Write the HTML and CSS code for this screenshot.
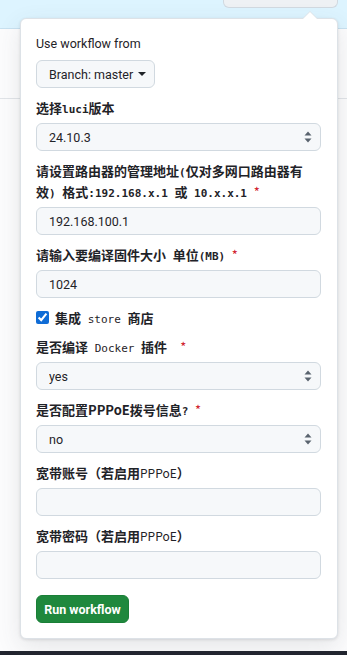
FILE: index.html
```html
<!DOCTYPE html>
<html lang="en">
<head>
    <meta charset="UTF-8">
    <meta name="viewport" content="width=device-width, initial-scale=1.0">
    <title>Run workflow</title>
    <link rel="stylesheet" href="styles.css">
</head>
<body>
    <div class="topbar">
        <div class="run-toggle"></div>
    </div>
    <div class="page">
        <div class="page-line"></div>
    </div>
    <div class="bottom-bar"></div>

    <div class="dropdown">
        <div class="title">Use workflow from</div>
        <button class="branch-btn">Branch: master <span class="caret-down"></span></button>

        <div class="field">
            <label class="label">选择<span class="mono">luci</span>版本</label>
            <div class="select-wrap">
                <select class="control"><option>24.10.3</option></select>
                <svg class="arrows" width="10" height="14" viewBox="0 0 10 14"><path d="M5 1.5 L8.5 5.5 H1.5 Z M5 12.5 L8.5 8.5 H1.5 Z" fill="#59636e"/></svg>
            </div>
        </div>

        <div class="field">
            <label class="label">请设置路由器的管理地址<span class="mono">(</span>仅对多网口路由器有效<span class="mono">) </span>格式<span class="mono">:192.168.x.1 </span>或<span class="mono"> 10.x.x.1 </span><span class="req">*</span></label>
            <input class="control" type="text" value="192.168.100.1">
        </div>

        <div class="field">
            <label class="label">请输入要编译固件大小<span class="mono"> </span>单位<span class="mono">(MB) </span><span class="req">*</span></label>
            <input class="control" type="text" value="1024">
        </div>

        <div class="field check-row">
            <input type="checkbox" checked>
            <span class="label">集成<span class="mono light"> store </span>商店</span>
        </div>

        <div class="field">
            <label class="label">是否编译<span class="mono light"> Docker </span>插件<span class="mono">  </span><span class="req">*</span></label>
            <div class="select-wrap">
                <select class="control"><option>yes</option></select>
                <svg class="arrows" width="10" height="14" viewBox="0 0 10 14"><path d="M5 1.5 L8.5 5.5 H1.5 Z M5 12.5 L8.5 8.5 H1.5 Z" fill="#59636e"/></svg>
            </div>
        </div>

        <div class="field">
            <label class="label">是否配置PPPoE拨号信息<span class="mono">? </span><span class="req">*</span></label>
            <div class="select-wrap">
                <select class="control"><option>no</option></select>
                <svg class="arrows" width="10" height="14" viewBox="0 0 10 14"><path d="M5 1.5 L8.5 5.5 H1.5 Z M5 12.5 L8.5 8.5 H1.5 Z" fill="#59636e"/></svg>
            </div>
        </div>

        <div class="field">
            <label class="label">宽带账号（若启用<span class="thin">PPPoE</span>）</label>
            <input class="control" type="text">
        </div>

        <div class="field">
            <label class="label">宽带密码（若启用<span class="thin">PPPoE</span>）</label>
            <input class="control" type="password">
        </div>

        <button class="run-btn">Run workflow</button>
    </div>
</body>
</html>
```

FILE: styles.css
```css
/* Reset */
* {
    margin: 0;
    padding: 0;
    box-sizing: border-box;
}

body {
    width: 347px;
    height: 655px;
    display: flex;
    flex-direction: column;
    background: #fff;
    color: #1f2328;
    font-family: Roboto, "Noto Sans CJK SC", sans-serif;
    overflow: hidden;
}

/* Page behind the menu */
.topbar {
    height: 29px;
    background: #ddf4ff;
    border-bottom: 1px solid #c8e1f0;
    display: flex;
    justify-content: flex-end;
    padding-right: 9px;
}

.run-toggle {
    width: 115px;
    height: 8px;
    background: #eef1f4;
    border: 1px solid #d1d9e0;
    border-top: none;
    border-radius: 0 0 6px 6px;
}

.page {
    flex: 1;
    background: #fcfcfd;
}

.page-line {
    height: 70px;
    border-bottom: 1px solid #e1e4e8;
}

.bottom-bar {
    height: 4px;
    background: #22252f;
}

/* Dropdown menu */
.dropdown {
    position: absolute;
    left: 20px;
    top: 18px;
    width: 318px;
    height: 621px;
    background: #fff;
    border: 1px solid #dde2e7;
    border-radius: 6px;
    box-shadow: 0 8px 24px rgba(66, 74, 83, 0.12), 0 1px 3px rgba(31, 35, 40, 0.12);
    padding: 15px 16px 15px 15px;
    display: flex;
    flex-direction: column;
    align-items: flex-start;
}

.dropdown::before,
.dropdown::after {
    content: "";
    position: absolute;
    border: 8px solid transparent;
    border-top: none;
}

.dropdown::before {
    top: -8px;
    right: 19px;
    border-bottom: 8px solid #dde2e7;
}

.dropdown::after {
    top: -7px;
    right: 19px;
    border-bottom: 8px solid #fff;
}

.title {
    font-size: 12.5px;
    line-height: 20px;
}

.branch-btn {
    flex: none;
    margin-top: 6px;
    height: 28px;
    padding: 0 8px 0 12px;
    background: #f6f8fa;
    border: 1px solid #d1d9e0;
    border-radius: 6px;
    font-family: inherit;
    font-size: 12.5px;
    color: #1f2328;
    display: flex;
    align-items: center;
    gap: 5px;
}

.caret-down {
    border: 4px solid transparent;
    border-top: 4px solid #1f2328;
    border-bottom: none;
}

/* Form fields */
.field {
    width: 285px;
    margin-top: 9px;
}

.label {
    display: block;
    font-family: "Noto Sans CJK SC", sans-serif;
    font-size: 13px;
    font-weight: 700;
    line-height: 21px;
    margin-bottom: 5px;
    white-space: pre-wrap;
}

.mono,
.req,
.thin {
    line-height: 1;
}

.mono {
    font-family: "DejaVu Sans Mono", "Liberation Mono", monospace;
    font-size: 11px;
    font-weight: 700;
}

.mono.light {
    font-weight: 400;
}

.thin {
    font-weight: 400;
    font-size: 12px;
}

.req {
    color: #d1242f;
    font-weight: 400;
}

.control {
    display: block;
    width: 100%;
    height: 28px;
    padding: 0 12px;
    background: #f6f8fa;
    border: 1px solid #d1d9e0;
    border-radius: 6px;
    font-family: Roboto, sans-serif;
    font-size: 12.5px;
    color: #1f2328;
    outline: none;
    appearance: none;
}

.select-wrap {
    position: relative;
}

.arrows {
    position: absolute;
    right: 8px;
    top: 7px;
}

.check-row {
    display: flex;
    align-items: center;
    gap: 6px;
    height: 20px;
}

.check-row input {
    width: 13px;
    height: 13px;
    accent-color: #0f6cd6;
}

.check-row .label {
    margin-bottom: 0;
}

.run-btn {
    margin-top: 16px;
    height: 28px;
    width: 93px;
    background: #1f883d;
    color: #fff;
    border: 1px solid #1a7f37;
    border-radius: 6px;
    font-family: inherit;
    font-size: 12.5px;
    font-weight: 700;
}
```
